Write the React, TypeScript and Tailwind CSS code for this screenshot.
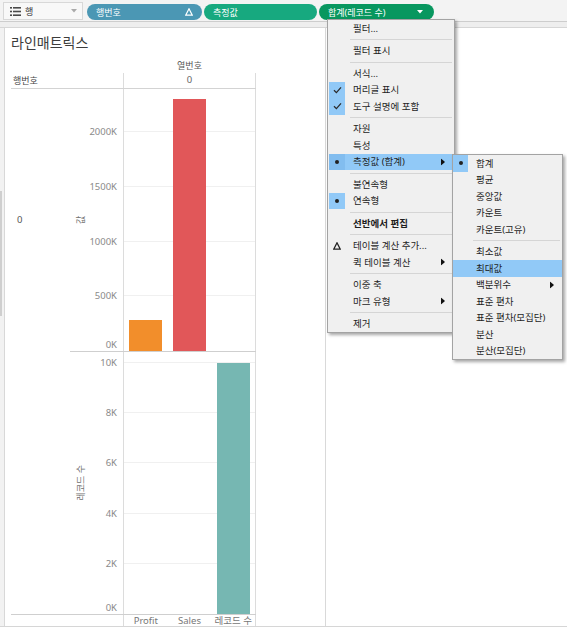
type MenuEntry =
  | { sep: true }
  | {
      sep?: false
      label: string
      mark?: 'check' | 'dot' | 'delta'
      markBg?: boolean
      sub?: boolean
      bold?: boolean
      active?: boolean
    }

const mainMenu: MenuEntry[] = [
  { label: '필터...' },
  { sep: true },
  { label: '필터 표시' },
  { sep: true },
  { label: '서식...' },
  { label: '머리글 표시', mark: 'check', markBg: true },
  { label: '도구 설명에 포함', mark: 'check', markBg: true },
  { sep: true },
  { label: '자원' },
  { label: '특성' },
  { label: '측정값 (합계)', mark: 'dot', sub: true, active: true },
  { sep: true },
  { label: '불연속형' },
  { label: '연속형', mark: 'dot', markBg: true },
  { sep: true },
  { label: '선반에서 편집', bold: true },
  { sep: true },
  { label: '테이블 계산 추가...', mark: 'delta' },
  { label: '퀵 테이블 계산', sub: true },
  { sep: true },
  { label: '이중 축' },
  { label: '마크 유형', sub: true },
  { sep: true },
  { label: '제거' },
]

const subMenu: MenuEntry[] = [
  { label: '합계', mark: 'dot', markBg: true },
  { label: '평균' },
  { label: '중앙값' },
  { label: '카운트' },
  { label: '카운트(고유)' },
  { sep: true },
  { label: '최소값' },
  { label: '최대값', active: true },
  { label: '백분위수', sub: true },
  { label: '표준 편차' },
  { label: '표준 편차(모집단)' },
  { label: '분산' },
  { label: '분산(모집단)' },
]

function Mark({ kind }: { kind?: 'check' | 'dot' | 'delta' }) {
  if (kind === 'check')
    return (
      <svg width="9" height="8" viewBox="0 0 9 8">
        <path d="M1 4.2 L3.4 6.6 L8 1.4" fill="none" stroke="#2b2b2b" strokeWidth="1.3" />
      </svg>
    )
  if (kind === 'dot') return <div className="h-[4px] w-[4px] rounded-full bg-[#222]"></div>
  if (kind === 'delta')
    return (
      <svg width="8" height="8" viewBox="0 0 8 8">
        <path d="M4 0.8 L7.3 7.2 L0.7 7.2 Z" fill="none" stroke="#222" strokeWidth="1.3" />
      </svg>
    )
  return null
}

function SubArrow() {
  return (
    <svg width="4" height="7" viewBox="0 0 4 7">
      <path d="M0 0 L4 3.5 L0 7 Z" fill="#111" />
    </svg>
  )
}

function Menu({ items, narrow }: { items: MenuEntry[]; narrow?: boolean }) {
  return (
    <div className="flex flex-col">
      {items.map((it, i) =>
        it.sep ? (
          <div key={i} className={`flex h-[6px] items-center ${narrow ? 'ml-[20px]' : 'ml-[22px]'} mr-[2px]`}>
            <div className="h-px w-full bg-[#d5d5d5]"></div>
          </div>
        ) : (
          <div
            key={i}
            className={`relative flex h-[16.5px] items-center ${narrow ? '' : 'mx-[1px]'} ${it.active ? 'bg-[#91c9f7]' : ''}`}
          >
            <div
              className={`flex h-full ${narrow ? 'w-[15px]' : 'w-[16px]'} items-center justify-center ${
                it.markBg ? 'bg-[#91c9f7]' : ''
              } ${it.active && it.mark ? 'bg-[#82bdef]' : ''}`}
            >
              <Mark kind={it.mark} />
            </div>
            <span className={`ml-[8px] text-[9.5px] leading-none text-[#1e1e1e] ${it.bold ? 'font-bold' : ''}`}>
              {it.label}
            </span>
            {it.sub && (
              <div className="absolute right-[8px] top-1/2 -translate-y-1/2">
                <SubArrow />
              </div>
            )}
          </div>
        ),
      )}
    </div>
  )
}

function Pill({ bg, label, right }: { bg: string; label: string; right?: React.ReactNode }) {
  return (
    <div className={`flex h-[16px] items-center rounded-full pl-[9px] text-[9px] text-white ${bg}`}>
      <span className="leading-none">{label}</span>
      <span className="ml-auto flex items-center">{right}</span>
    </div>
  )
}

const pane1Ticks = [
  { v: 0, l: '0K' },
  { v: 500000, l: '500K' },
  { v: 1000000, l: '1000K' },
  { v: 1500000, l: '1500K' },
  { v: 2000000, l: '2000K' },
]
const pane2Ticks = [
  { v: 0, l: '0K' },
  { v: 2000, l: '2K' },
  { v: 4000, l: '4K' },
  { v: 6000, l: '6K' },
  { v: 8000, l: '8K' },
  { v: 10000, l: '10K' },
]

function Pane({
  ticks,
  scale,
  title,
  bars,
}: {
  ticks: { v: number; l: string }[]
  scale: number
  title: string
  bars: { color: string; value: number }[]
}) {
  return (
    <div className="flex h-[262px]">
      {/* axis */}
      <div className="relative w-[53px]">
        <div className="absolute left-[11px] top-1/2 flex h-0 w-0 items-center justify-center">
          <span className="-rotate-90 whitespace-nowrap text-[9px] text-[#6f6f6f]">{title}</span>
        </div>
        {ticks.map((t) => {
          const y = t.v * scale
          return (
            <div
              key={t.l}
              className={`absolute right-[6px] text-[9.5px] leading-[12px] text-[#8a8a8a] ${t.v === 0 ? '' : 'translate-y-1/2'}`}
              style={{ bottom: y }}
            >
              {t.l}
            </div>
          )
        })}
      </div>
      {/* plot */}
      <div className="relative flex w-[133px] items-end border-x border-[#dcdcdc]">
        {ticks
          .filter((t) => t.v > 0)
          .map((t) => (
            <div key={t.l} className="absolute left-0 right-0 h-px bg-[#f0f0f0]" style={{ bottom: t.v * scale }}></div>
          ))}
        {bars.map((b, i) => (
          <div key={i} className="relative flex h-full flex-1 items-end justify-center">
            {b.value > 0 && <div className={`w-[33px] ${b.color}`} style={{ height: b.value * scale }}></div>}
          </div>
        ))}
      </div>
    </div>
  )
}

export default function App() {
  return (
    <div className="relative h-[628px] w-[567px] overflow-hidden bg-white font-['Noto_Sans','Noto_Sans_CJK_KR',sans-serif] text-[#333]">
      {/* shelf bar */}
      <div className="flex h-[22px] items-start border-b border-[#cdcdcd] bg-[#f3f3f3]">
        <div className="ml-[3px] mt-[2px] flex h-[18px] w-[80px] items-center border border-[#d8d8d8] bg-[#f8f8f8]">
          <svg className="ml-[6px]" width="11" height="9" viewBox="0 0 11 9">
            <g fill="#4a4a4a">
              <rect x="0" y="0" width="2" height="1.6" />
              <rect x="3" y="0" width="8" height="1.6" />
              <rect x="0" y="3.7" width="2" height="1.6" />
              <rect x="3" y="3.7" width="8" height="1.6" />
              <rect x="0" y="7.4" width="2" height="1.6" />
              <rect x="3" y="7.4" width="8" height="1.6" />
            </g>
          </svg>
          <span className="ml-[4px] text-[9px] leading-none text-[#333]">행</span>
          <svg className="ml-auto mr-[5px]" width="6" height="4" viewBox="0 0 6 4">
            <path d="M0 0 L6 0 L3 3.5 Z" fill="#aaa" />
          </svg>
        </div>
        <div className="ml-[4px] mt-[4px] grid grid-cols-[115px_113px_115px] gap-[2px]">
          <Pill
            bg="bg-[#4b97b4]"
            label="행번호"
            right={
              <svg className="mr-[9px]" width="8" height="8" viewBox="0 0 8 8">
                <path d="M4 0.8 L7.3 7.2 L0.7 7.2 Z" fill="none" stroke="#fff" strokeWidth="1.2" />
              </svg>
            }
          />
          <Pill bg="bg-[#17a97f]" label="측정값" />
          <Pill
            bg="bg-[#08975f]"
            label="합계(레코드 수)"
            right={
              <svg className="mr-[11px]" width="6" height="4" viewBox="0 0 6 4">
                <path d="M0 0 L6 0 L3 3.5 Z" fill="#fff" />
              </svg>
            }
          />
        </div>
      </div>
      <div className="h-[5px] bg-[#eeeeee]"></div>

      {/* body */}
      <div className="flex border-y border-[#d6d6d6]">
        <div className="relative w-[5px] border-r border-[#d8d8d8] bg-[#f2f2f2]">
          <div className="absolute left-0 top-[163px] h-[125px] w-[2px] bg-[#cfcfcf]"></div>
        </div>
        <div className="flex w-[321px] flex-col border-r border-[#d9d9d9]">
          <div className="flex h-[30px] items-center pl-[6px] text-[14px] leading-none text-[#3c3c3c]">라인매트릭스</div>
          <div className="ml-[6px] w-[245px]">
            <div className="flex h-[15px]">
              <div className="w-[112px]"></div>
              <div className="flex w-[133px] items-center justify-center text-[9px] text-[#555]">열번호</div>
            </div>
            <div className="flex h-[16px] border-b border-[#d3d3d3]">
              <div className="flex w-[112px] items-center pl-[2px] text-[9px] text-[#444]">행번호</div>
              <div className="flex w-[133px] items-center justify-center border-x border-[#dcdcdc] text-[9.5px] text-[#666]">
                0
              </div>
            </div>
            <div className="flex border-b border-[#cfcfcf]">
              <div className="w-[59px]">
                <div className="flex h-[262px] items-center pl-[6px] text-[9.5px] text-[#555]">0</div>
              </div>
              <div className="flex w-[186px] flex-col">
                <div className="border-b border-[#cfcfcf]">
                  <Pane
                    ticks={pane1Ticks}
                    scale={54.75 / 500000}
                    title="값"
                    bars={[
                      { color: 'bg-[#f28e2b]', value: 286397 },
                      { color: 'bg-[#e15759]', value: 2297201 },
                      { color: 'bg-[#76b7b2]', value: 0 },
                    ]}
                  />
                </div>
                <Pane
                  ticks={pane2Ticks}
                  scale={251 / 10000}
                  title="레코드 수"
                  bars={[
                    { color: 'bg-[#f28e2b]', value: 0 },
                    { color: 'bg-[#e15759]', value: 0 },
                    { color: 'bg-[#76b7b2]', value: 9994 },
                  ]}
                />
              </div>
            </div>
            <div className="flex h-[11px]">
              <div className="w-[112px]"></div>
              <div className="flex w-[133px] border-x border-[#dcdcdc] text-[9.5px] leading-[11px] text-[#777]">
                <div className="flex-1 text-center">Profit</div>
                <div className="flex-1 text-center">Sales</div>
                <div className="flex-1 text-center">레코드 수</div>
              </div>
            </div>
          </div>
        </div>
        <div className="flex-1 bg-white"></div>
      </div>

      {/* context menu */}
      <div className="absolute left-[327px] top-[19px] w-[128px] border border-[#a3a3a3] bg-[#f0f0f0] shadow-[2px_2px_3px_rgba(0,0,0,0.35)]">
        <Menu items={mainMenu} />
      </div>
      <div className="absolute left-[452px] top-[154px] w-[111px] border border-[#a3a3a3] bg-[#f0f0f0] shadow-[2px_2px_3px_rgba(0,0,0,0.35)]">
        <Menu items={subMenu} narrow />
      </div>
    </div>
  )
}
